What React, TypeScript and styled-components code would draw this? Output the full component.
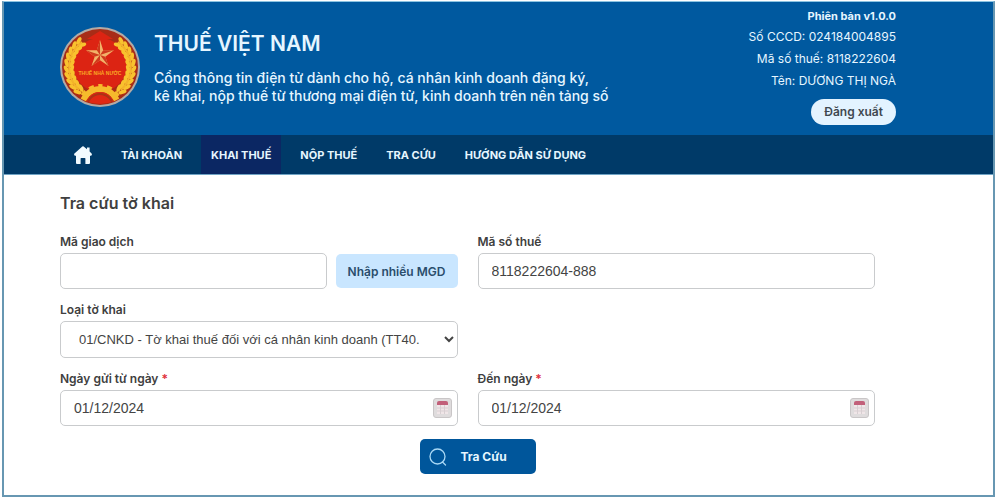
import React from "react";
import styled, { createGlobalStyle } from "styled-components";

const GlobalStyle = createGlobalStyle`
  *, *::before, *::after { box-sizing: border-box; }
  body {
    margin: 0;
    background: #fff;
    color: #404040;
    font-family: Inter, "Noto Sans", sans-serif;
    font-size: 12px;
  }
  button, input, select { font: inherit; color: inherit; margin: 0; }
`;

const Page = styled.div`
  padding: 1px 5px 6px 2px;
`;

const Frame = styled.div`
  border: 2px solid #6797b2;
  border-top: 1px solid #8cc4e2;
`;

const Header = styled.header`
  display: flex;
  align-items: flex-start;
  gap: 14px;
  padding: 4px 97px 10px 56px;
  background: #00599f;
  color: #e6f6ff;
`;

const Emblem = styled.svg`
  flex: none;
  width: 80px;
  height: 80px;
  margin-top: 21px;
`;

const Brand = styled.div`
  flex: 1;
  padding-top: 24px;
`;

const SiteName = styled.h1`
  margin: 0 0 11px;
  font-size: 21px;
  line-height: 28px;
  font-weight: 600;
`;

const Tagline = styled.p`
  margin: 0;
  font-size: 14px;
  line-height: 18px;
  font-weight: 500;
  white-space: nowrap;
`;

const Account = styled.div`
  display: flex;
  flex-direction: column;
  align-items: flex-end;
  line-height: 22px;
  white-space: nowrap;
`;

const Version = styled.strong`
  font-size: 11px;
  line-height: 20px;
  font-weight: 700;
`;

const Logout = styled.button`
  margin-top: 7px;
  height: 26px;
  padding: 0 13px;
  border: 0;
  border-radius: 13px;
  background: #e3f3ff;
  color: #404850;
  font-weight: 600;
`;

const Nav = styled.nav`
  display: flex;
  gap: 9px;
  height: 40px;
  padding-left: 60px;
  background: #003a68;
  border-bottom: 1px solid #6fa3c4;
`;

const NavLink = styled.a<{ $active?: boolean }>`
  display: flex;
  align-items: center;
  padding: 0 10px;
  background: ${(p) => (p.$active ? "#0b2763" : "transparent")};
  color: #e6f6ff;
  font-size: 11px;
  font-weight: 700;
  text-decoration: none;
  white-space: nowrap;
`;

const Main = styled.main`
  padding: 16px 118px 21px 56px;
`;

const Title = styled.h2`
  margin: 0 0 18px;
  font-size: 16px;
  line-height: 24px;
  font-weight: 600;
`;

const Form = styled.form`
  display: grid;
  grid-template-columns: 1fr 1fr;
  gap: 12px 20px;
`;

const Field = styled.div<{ $full?: boolean }>`
  min-width: 0;
  padding-right: ${(p) => (p.$full ? "calc(50% + 10px)" : "0")};
  grid-column: ${(p) => (p.$full ? "1 / -1" : "auto")};
`;

const Label = styled.label`
  display: block;
  height: 20px;
  line-height: 18px;
  font-weight: 600;
  white-space: nowrap;
`;

const Required = styled.span`
  color: #e0303a;
`;

const Row = styled.div`
  display: flex;
  align-items: center;
  gap: 9px;
`;

const controlBox = `
  width: 100%;
  height: 36px;
  border: 1px solid #c9cbcd;
  border-radius: 5px;
  background: #fff;
  color: #444;
  font-family: "Liberation Sans", Arial, sans-serif;
  font-size: 14px;
`;

const TextBox = styled.input`
  ${controlBox}
  min-width: 0;
  flex: 1;
  padding: 0 13px;
`;

const SelectBox = styled.select`
  ${controlBox}
  display: block;
  height: 37px;
  padding: 0 0 0 14px;
  font-size: 13px;
`;

const DateBox = styled.div`
  ${controlBox}
  display: flex;
  align-items: center;
  padding-right: 5px;
`;

const DateInput = styled.input`
  flex: 1;
  min-width: 0;
  height: 100%;
  padding: 0 13px;
  border: 0;
  background: transparent;
`;

const IconButton = styled.button`
  display: flex;
  padding: 0;
  border: 0;
  background: none;
`;

const MultiButton = styled.button`
  flex: none;
  width: 122px;
  height: 34px;
  padding: 0;
  border: 0;
  border-radius: 5px;
  background: #c9e6ff;
  color: #2a4d6c;
  font-weight: 600;
`;

const Actions = styled.div`
  grid-column: 1 / -1;
  display: flex;
  justify-content: center;
  padding: 1px 0 0 20px;
`;

const SearchButton = styled.button`
  display: flex;
  align-items: center;
  gap: 14px;
  width: 116px;
  height: 35px;
  padding: 0 9px;
  border: 0;
  border-radius: 5px;
  background: #00569b;
  color: #e6f6ff;
  font-weight: 700;
`;

const leafAngles = [-48, -37, -26, -15, -4, 7, 18, 29, 40, 51];

function Wreath() {
  return (
    <g fill="#f9c22e">
      {leafAngles.map((angle) => (
        <g key={angle} transform={`rotate(${angle} 40 40) translate(9 40)`}>
          <ellipse cx="-2.6" cy="0" rx="2" ry="4.2" transform="rotate(-24 -2.6 0)" />
          <ellipse cx="2.6" cy="0" rx="2" ry="4.2" transform="rotate(24 2.6 0)" />
        </g>
      ))}
      <path d="M19 63 A31 31 0 0 1 22 15" fill="none" stroke="#f4b32a" strokeWidth="2" />
    </g>
  );
}

function StateEmblem() {
  return (
    <Emblem viewBox="0 0 80 80" role="img" aria-label="Thuế Nhà nước">
      <defs>
        <clipPath id="disc"><circle cx="40" cy="40" r="37" /></clipPath>
      </defs>
      <circle cx="40" cy="40" r="40" fill="#b3aaa5" />
      <circle cx="40" cy="40" r="38" fill="#a82c17" />
      <g clipPath="url(#disc)">
        <circle cx="40" cy="38" r="27" fill="#dc2413" />
        <path d="M27 12 L40 4 L53 12 Z" fill="#dc2413" />
        <Wreath />
        <g transform="translate(80 0) scale(-1 1)"><Wreath /></g>
        <circle cx="40" cy="80" r="18" fill="none" stroke="#f6ba2c" strokeWidth="6" />
        <circle cx="40" cy="80" r="21" fill="none" stroke="#f6ba2c" strokeWidth="4" strokeDasharray="5 4.42" strokeDashoffset="2.5" transform="rotate(-90 40 80)" />
        <circle cx="40" cy="80" r="15" fill="#e02814" />
        <circle cx="40" cy="80" r="13" fill="none" stroke="#ac3216" strokeWidth="2" />
      </g>
      <path d="M40 13 L43.2 23.2 L54 23.3 L45.3 29.7 L48.5 39 L40 33.2 L31.5 39 L34.7 29.7 L26 23.3 L36.8 23.2 Z" fill="#f2b269" />
      <path d="M40 28 L40 13 L36.8 23.2 Z M40 28 L54 23.3 L43.2 23.2 Z M40 28 L48.5 39 L45.3 29.7 Z M40 28 L31.5 39 L40 33.2 Z M40 28 L26 23.3 L34.7 29.7 Z" fill="#cf3a1d" />
      <text x="40" y="48" textAnchor="middle" fontFamily="Liberation Sans, sans-serif" fontSize="5" fontWeight="700" fill="#f9a825">THUẾ NHÀ NƯỚC</text>
    </Emblem>
  );
}

function HomeIcon() {
  return (
    <svg width="18" height="18" viewBox="0 0 18 18" aria-hidden="true">
      <path d="M8.3 0.4 Q9 -0.1 9.7 0.4 L13 3.2 V1.6 H15.6 V5.6 L17.8 7.8 Q18.2 9.6 17 9.8 H16 V17 Q16 18 15 18 H11.4 V12.6 Q11.4 12 10.8 12 H7.2 Q6.6 12 6.6 12.6 V18 H3 Q2 18 2 17 V9.8 H1 Q-0.2 9.6 0.2 7.8 Z" fill="#f2fbff" />
    </svg>
  );
}

function CalendarIcon() {
  return (
    <svg width="19" height="20" viewBox="0 0 19 20" aria-hidden="true">
      <rect x="0.5" y="0.5" width="18" height="19" rx="2.5" fill="#dfdcdd" stroke="#c9c6c7" />
      <path d="M4 5 Q4 3 6 3 H13 Q15 3 15 5 V7 H4 Z" fill="#c2607a" />
      <rect x="4" y="7" width="11" height="9" fill="#f0e6e8" />
      <path d="M4 10 H15 M4 13 H15 M7.5 7 V16 M11.5 7 V16" stroke="#d8cfd2" />
    </svg>
  );
}

function SearchIcon() {
  return (
    <svg width="18" height="18" viewBox="0 0 18 18" fill="none" stroke="#a9d8f5" strokeWidth="1.3" strokeLinecap="round" aria-hidden="true">
      <circle cx="8.5" cy="8.5" r="7.5" />
      <path d="M13.5 14 L16.5 17" />
    </svg>
  );
}

const menu = ["TÀI KHOẢN", "KHAI THUẾ", "NỘP THUẾ", "TRA CỨU", "HƯỚNG DẪN SỬ DỤNG"];

function DateField({ id, label }: { id: string; label: string }) {
  return (
    <Field>
      <Label htmlFor={id}>
        {label} <Required>*</Required>
      </Label>
      <DateBox>
        <DateInput id={id} defaultValue="01/12/2024" required />
        <IconButton type="button" aria-label="Chọn ngày"><CalendarIcon /></IconButton>
      </DateBox>
    </Field>
  );
}

export default function App() {
  return (
    <Page>
      <GlobalStyle />
      <Frame>
        <Header>
          <StateEmblem />
          <Brand>
            <SiteName>THUẾ VIỆT NAM</SiteName>
            <Tagline>
              Cổng thông tin điện tử dành cho hộ, cá nhân kinh doanh đăng ký,
              <br />
              kê khai, nộp thuế từ thương mại điện tử, kinh doanh trên nền tảng số
            </Tagline>
          </Brand>
          <Account>
            <Version>Phiên bản v1.0.0</Version>
            <span>Số CCCD: 024184004895</span>
            <span>Mã số thuế: 8118222604</span>
            <span>Tên: DƯƠNG THỊ NGÀ</span>
            <Logout type="button">Đăng xuất</Logout>
          </Account>
        </Header>
        <Nav>
          <NavLink href="#home" aria-label="Trang chủ"><HomeIcon /></NavLink>
          {menu.map((item) => (
            <NavLink key={item} href="#menu" $active={item === "KHAI THUẾ"}>{item}</NavLink>
          ))}
        </Nav>
        <Main>
          <Title>Tra cứu tờ khai</Title>
          <Form onSubmit={(e) => e.preventDefault()}>
            <Field>
              <Label htmlFor="transaction">Mã giao dịch</Label>
              <Row>
                <TextBox id="transaction" />
                <MultiButton type="button">Nhập nhiều MGD</MultiButton>
              </Row>
            </Field>
            <Field>
              <Label htmlFor="taxcode">Mã số thuế</Label>
              <TextBox id="taxcode" defaultValue="8118222604-888" />
            </Field>
            <Field $full>
              <Label htmlFor="kind">Loại tờ khai</Label>
              <SelectBox id="kind">
                <option>01/CNKD - Tờ khai thuế đối với cá nhân kinh doanh (TT40.</option>
              </SelectBox>
            </Field>
            <DateField id="from" label="Ngày gửi từ ngày" />
            <DateField id="to" label="Đến ngày" />
            <Actions>
              <SearchButton type="submit"><SearchIcon />Tra Cứu</SearchButton>
            </Actions>
          </Form>
        </Main>
      </Frame>
    </Page>
  );
}
